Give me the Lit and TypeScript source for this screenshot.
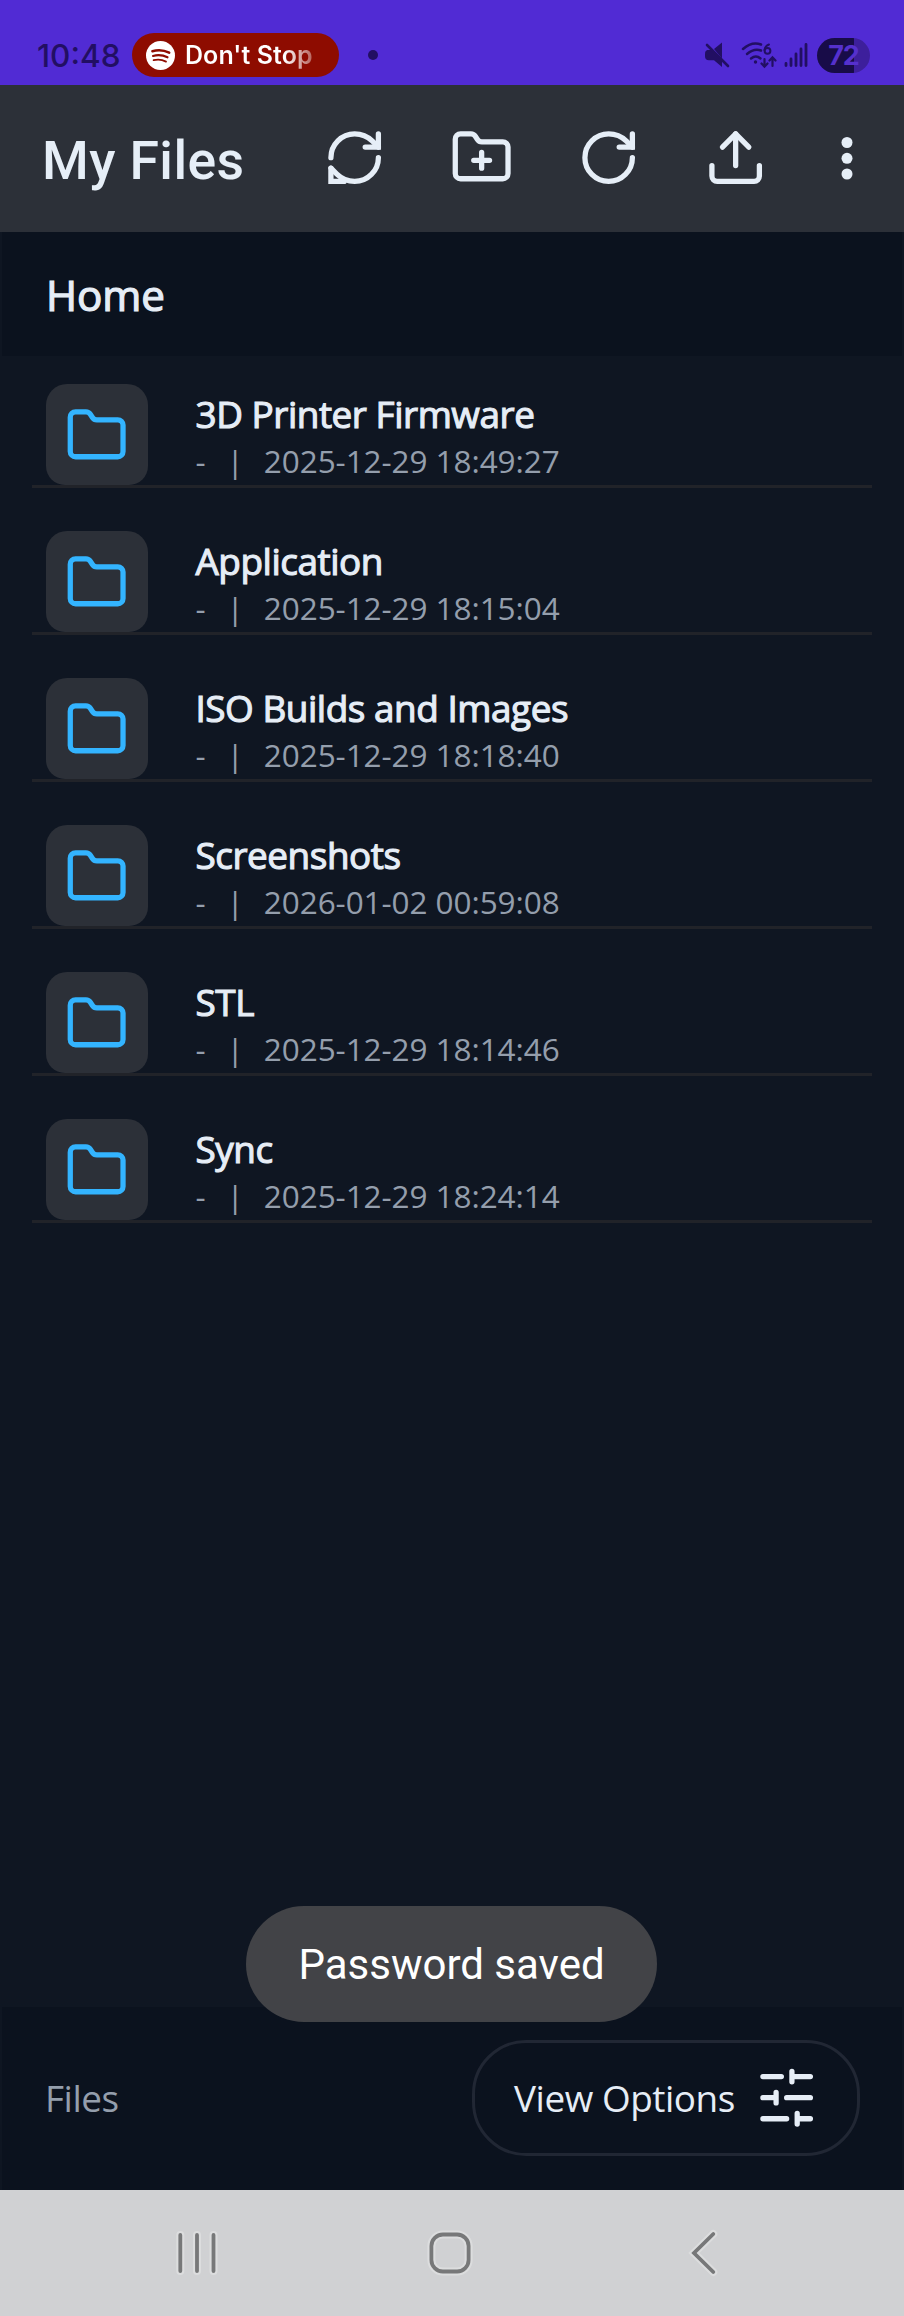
import { LitElement, html, css, svg } from "lit";
import { customElement, property } from "lit/decorators.js";

const ICONS: Record<string, unknown> = {
  sync: svg`<path d="M3 12a9 9 0 0 1 9-9 9.75 9.75 0 0 1 6.74 2.74L21 8"/><path d="M21 3v5h-5"/><path d="M21 12a9 9 0 0 1-9 9 9.75 9.75 0 0 1-6.74-2.74L3 16"/><path d="M3 16v5h5"/>`,
  folderPlus: svg`<path d="M20 20a2 2 0 0 0 2-2V8a2 2 0 0 0-2-2h-7.9a2 2 0 0 1-1.69-.9L9.6 3.9A2 2 0 0 0 7.93 3H4a2 2 0 0 0-2 2v13a2 2 0 0 0 2 2Z"/><path d="M12 10v6M9 13h6"/>`,
  folder: svg`<path d="M20 20a2 2 0 0 0 2-2V8a2 2 0 0 0-2-2h-7.9a2 2 0 0 1-1.69-.9L9.6 3.9A2 2 0 0 0 7.93 3H4a2 2 0 0 0-2 2v13a2 2 0 0 0 2 2Z"/>`,
  reload: svg`<path d="M21 12a9 9 0 1 1-9-9c2.52 0 4.93 1 6.74 2.74L21 8"/><path d="M21 3v5h-5"/>`,
  upload: svg`<path d="M12 3v12"/><path stroke-linejoin="round" d="m17 8-5-5-5 5"/><path d="M21 15v4a2 2 0 0 1-2 2H5a2 2 0 0 1-2-2v-4"/>`,
  sliders: svg`<path d="M3 4h7M14 4h7M14 2v4M3 12h5M12 12h9M8 10v4M3 20h9M16 20h5M16 18v4"/>`,
};

@customElement("line-icon")
class LineIcon extends LitElement {
  @property() name = "";
  static styles = css`
    :host { display: block; width: 63.3px; height: 63.3px; flex: none; }
    svg { display: block; width: 100%; height: 100%; }
  `;
  render() {
    return html`<svg viewBox="0 0 24 24" fill="none" stroke="currentColor" stroke-width="2" stroke-linecap="round" stroke-linejoin="miter">${ICONS[this.name]}</svg>`;
  }
}

@customElement("status-bar")
class StatusBar extends LitElement {
  static styles = css`
    :host { display: flex; align-items: center; height: 85px; box-sizing: border-box; padding: 25px 34px 0 37px; background: #512bd4; color: #220f63; font-family: Inter, sans-serif; }
    .time { width: 95px; font: 500 31.500px/44px Inter, sans-serif; letter-spacing: 0; white-space: nowrap; padding-top: 2px; }
    .pill { display: flex; align-items: center; box-sizing: border-box; width: 207px; height: 44px; padding-left: 14px; border-radius: 22px; background: #8e0c00; }
    .pill svg { width: 29px; height: 29px; flex: none; }
    .song { margin-left: 10px; font: 600 25px/44px Inter, sans-serif; letter-spacing: .05px; white-space: nowrap; color: transparent; background: linear-gradient(90deg, #fff 78%, rgba(255,255,255,.35) 100%); -webkit-background-clip: text; background-clip: text; }
    .dot { width: 10px; height: 10px; margin-left: 29px; border-radius: 50%; background: #220f63; }
    .spacer { flex: 1; }
    .icons { display: block; width: 104px; height: 30px; margin-right: 9px; }
    .battery { display: flex; align-items: center; justify-content: center; width: 53px; height: 35px; border-radius: 17.500px; background: linear-gradient(90deg, #180c48 37.500px, #3d1f9c 37.500px); color: #5530cd; font: 700 27px/35px Inter, sans-serif; letter-spacing: -1px; }
  `;
  render() {
    return html`
      <div class="time">10:48</div>
      <div class="pill">
        <svg viewBox="0 0 29 29" fill="none" stroke="#8e0c00" stroke-linecap="round">
          <circle cx="14.5" cy="14.5" r="14.5" fill="#fff" stroke="none"/>
          <path d="M6.4 10.2Q15 7.6 23.2 11.6" stroke-width="2.5"/>
          <path d="M7 14.9Q14.6 12.8 21.5 16.3" stroke-width="2.1"/>
          <path d="M7.6 19.2Q14 17.4 20 20.6" stroke-width="1.8"/>
        </svg>
        <span class="song">Don't Stop</span>
      </div>
      <div class="dot"></div>
      <div class="spacer"></div>
      <svg class="icons" viewBox="704 40 104 30" fill="none" stroke="#220f63" stroke-linecap="round">
        <path fill="#220f63" stroke="none" d="M714 49l8-6.500v16zM707 50h5l10 10v7l-8-6.800h-5a4 4 0 0 1-4-4v-2a4 4 0 0 1 2-4.200z"/>
        <path d="M707 45l21 21" stroke-width="2.600"/>
        <g stroke-width="2.500">
          <path d="M743 49Q752 41 761 44.500"/><path d="M747 54Q754 48 761 50.500"/><path d="M751 58.500Q756 54.500 760.500 58.500"/>
          <path d="M764.500 59v7M761.500 63.500l3 3.200 3-3.200M772.500 66v-8M769.500 60.500l3-3.200 3 3.200" stroke-width="2.200"/>
          <path d="M769 44.500Q765 46 764.500 50" stroke-width="2"/><circle cx="767.500" cy="50.800" r="2.900" stroke-width="2"/>
        </g>
        <circle cx="755.500" cy="62" r="1.700" fill="#220f63" stroke="none"/>
        <path d="M786 63.500v2M791 59v6.500M796 54v11.500M801 49v16.500M806 44.500v21" stroke-width="2.800"/>
      </svg>
      <div class="battery">72</div>
    `;
  }
}

@customElement("file-row")
class FileRow extends LitElement {
  @property() name = "";
  @property() date = "";
  static styles = css`
    :host { display: flex; box-sizing: border-box; height: 104px; padding-left: 14px; border-bottom: 3px solid #212329; font-family: "Open Sans", sans-serif; }
    .tile { display: flex; align-items: center; justify-content: center; width: 102px; height: 101px; border-radius: 21px 21px 19px 19px; background: #2c3038; color: #33b4ff; }
    .tile line-icon { margin-top: 1.500px; }
    .info { margin-left: 47.500px; }
    .name { height: 50px; margin-top: 5px; font-size: 36.900px; line-height: 50px; letter-spacing: -.46px; color: #e6edf6; -webkit-text-stroke: 1.100px #e6edf6; white-space: nowrap; }
    .meta { display: flex; height: 44px; font-size: 31.500px; line-height: 44px; letter-spacing: -.07px; color: #949eac; white-space: nowrap; }
    .sep { margin: 0 20px 0 21px; }
  `;
  render() {
    return html`
      <div class="tile"><line-icon name="folder"></line-icon></div>
      <div class="info">
        <div class="name">${this.name}</div>
        <div class="meta"><span>-</span><span class="sep">|</span><span>${this.date}</span></div>
      </div>
    `;
  }
}

const FILES = [
  ["3D Printer Firmware", "2025-12-29 18:49:27"],
  ["Application", "2025-12-29 18:15:04"],
  ["ISO Builds and Images", "2025-12-29 18:18:40"],
  ["Screenshots", "2026-01-02 00:59:08"],
  ["STL", "2025-12-29 18:14:46"],
  ["Sync", "2025-12-29 18:24:14"],
];

@customElement("app-root")
class AppRoot extends LitElement {
  static styles = css`
    :host { display: flex; flex-direction: column; position: relative; width: 904px; height: 2316px; overflow: hidden; background: #0f1622; color: #e6edf6; font-family: "Open Sans", sans-serif; }
    .toolbar { display: flex; align-items: center; flex: none; height: 147px; box-sizing: border-box; padding: 0 51.500px 1px 42px; background: #2c3038; color: #e6eef7; }
    .title { flex: 1; font: 500 53.500px/70px Roboto, sans-serif; letter-spacing: .4px; padding-top: 5px; white-space: nowrap; }
    .actions { display: flex; gap: 63.700px; }
    .more { display: block; width: 12px; height: 44px; margin-left: 73px; }
    .crumb { flex: none; height: 124px; box-sizing: border-box; margin: 0 2px; padding-left: 44px; background: #0b121e; font-size: 42.200px; line-height: 126px; -webkit-text-stroke: 1.200px #e6edf6; letter-spacing: -.1px; }
    .list { flex: 1; display: flex; flex-direction: column; gap: 43px; padding: 28px 32px 0; }
    .footer { flex: none; display: flex; align-items: center; justify-content: space-between; height: 183px; box-sizing: border-box; margin: 0 2px; padding: 0 42px 0 43px; background: #0b121e; font-size: 36.900px; line-height: 50px; letter-spacing: -.45px; }
    .count { color: #949eac; margin-top: -1px; }
    .options { display: flex; align-items: center; justify-content: space-between; width: 388px; height: 116px; box-sizing: border-box; padding: 0 39px; border: 3px solid #212734; border-radius: 54px; margin-top: -1px; white-space: nowrap; }
    .nav { flex: none; height: 126px; background: #d0d1d3; }
    .nav svg { display: block; width: 904px; height: 126px; }
    .toast { position: absolute; left: 246px; top: 1906px; display: flex; align-items: center; justify-content: center; width: 411px; height: 116px; box-sizing: border-box; padding-top: 2px; border-radius: 58px; background: #424347; color: #fff; font: 400 42px/50px Roboto, sans-serif; white-space: nowrap; }
  `;
  render() {
    const glyphs = svg`<path d="M180.300 45v36M197 45v36M213.500 45v36"/><rect x="431.400" y="44.500" width="37.200" height="37" rx="11.500"/><path d="M713.300 44l-19.300 19 19.300 19"/>`;
    return html`
      <status-bar></status-bar>
      <div class="toolbar">
        <div class="title">My Files</div>
        <div class="actions">
          <line-icon name="sync"></line-icon>
          <line-icon name="folderPlus"></line-icon>
          <line-icon name="reload"></line-icon>
          <line-icon name="upload"></line-icon>
        </div>
        <svg class="more" viewBox="0 0 12 44" fill="currentColor"><circle cx="6" cy="6.500" r="5.500"/><circle cx="6" cy="22.300" r="5.500"/><circle cx="6" cy="38" r="5.500"/></svg>
      </div>
      <div class="crumb">Home</div>
      <div class="list">${FILES.map(([n, d]) => html`<file-row .name=${n} .date=${d}></file-row>`)}</div>
      <div class="footer">
        <span class="count">Files</span>
        <div class="options"><span>View Options</span><line-icon name="sliders"></line-icon></div>
      </div>
      <div class="nav">
        <svg viewBox="0 0 904 126" fill="none" stroke-linecap="round">
          <g stroke="#dcddde" stroke-width="8">${glyphs}</g>
          <g stroke="#777879" stroke-width="3.800">${glyphs}</g>
        </svg>
      </div>
      <div class="toast">Password saved</div>
    `;
  }
}
